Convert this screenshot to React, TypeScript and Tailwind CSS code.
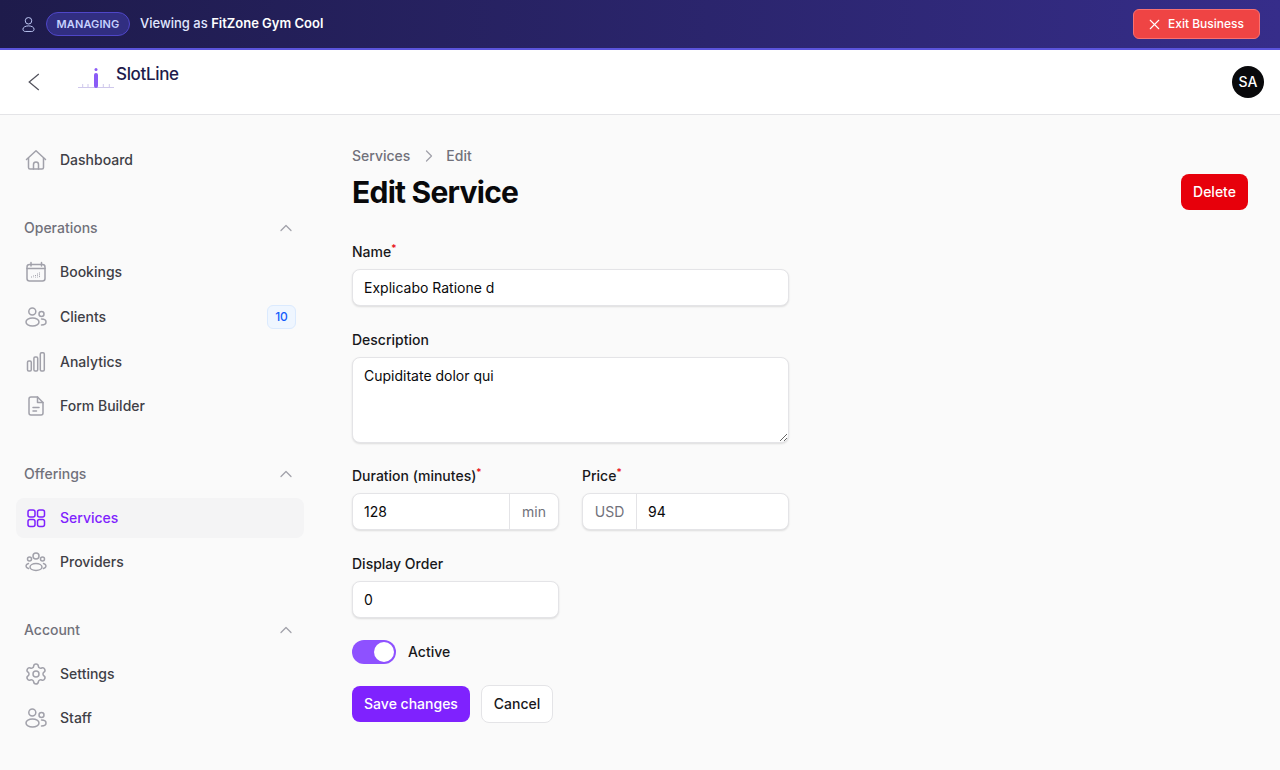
import { ChevronRight, ChevronUp, Settings, X } from "lucide-react";
import type { ReactNode } from "react";

const iconClass = "w-6 h-6 shrink-0 text-[#a1a1aa]";

function Svg({ children, className = iconClass }: { children: ReactNode; className?: string }) {
  return (
    <svg
      viewBox="0 0 24 24"
      fill="none"
      stroke="currentColor"
      strokeWidth="1.5"
      strokeLinecap="round"
      strokeLinejoin="round"
      className={className}
    >
      {children}
    </svg>
  );
}

const HomeIcon = () => (
  <Svg>
    <path d="M2.500 11.500 12 2.800l9.500 8.700" />
    <path d="M4.500 10v9.500a1.500 1.500 0 0 0 1.500 1.500h12a1.500 1.500 0 0 0 1.500-1.500V10" />
    <path d="M9.500 21v-4.500a2.500 2.500 0 0 1 5 0V21" />
  </Svg>
);

const CalendarIcon = () => (
  <Svg>
    <rect x="3" y="4.500" width="18" height="16.500" rx="2.500" />
    <path d="M3 8.500h18M7 2.500v3.500M17.500 2.500v3.500" />
    <path d="M7.500 16.500v1M9.500 15.500v2M11.500 15v2.500M13.500 13.500v4M15.500 12.500v5" strokeWidth="1" strokeDasharray="1 0.8" strokeLinecap="butt" />
  </Svg>
);

const UsersIcon = () => (
  <Svg>
    <circle cx="8.300" cy="6.500" r="3.500" />
    <circle cx="17.500" cy="9" r="2.500" />
    <ellipse cx="8.500" cy="17" rx="6.500" ry="4" />
    <path d="M17.500 14c2.500 0 4.500 1.300 4.500 3s-2 3-4.500 3" />
  </Svg>
);

const BarsIcon = () => (
  <Svg>
    <rect x="3.500" y="11" width="3.800" height="10" rx="1.200" />
    <rect x="9.900" y="7" width="3.800" height="14" rx="1.200" />
    <rect x="16.300" y="2.800" width="4" height="18.200" rx="1.200" />
  </Svg>
);

const FileIcon = () => (
  <Svg>
    <path d="M13.500 3H7a2 2 0 0 0-2 2v14a2 2 0 0 0 2 2h10a2 2 0 0 0 2-2V8.500L13.500 3Z" />
    <path d="M13.500 3v5.500H19" />
    <path d="M9 13.500h6M9 17h3.500" />
  </Svg>
);

const GridIcon = () => (
  <Svg className="w-6 h-6 shrink-0 text-[#7f22fe]">
    <rect x="4" y="4" width="7" height="7" rx="2" />
    <rect x="13.500" y="4" width="7" height="7" rx="2" />
    <rect x="4" y="13.500" width="7" height="7" rx="2" />
    <rect x="13.500" y="13.500" width="7" height="7" rx="2" />
  </Svg>
);

const ProvidersIcon = () => (
  <Svg>
    <circle cx="12" cy="6" r="3" />
    <circle cx="5.500" cy="9" r="2" />
    <circle cx="18.500" cy="9" r="2" />
    <ellipse cx="12" cy="17" rx="6" ry="3.500" />
    <path d="M4.500 13.500C3 14 2 15 2 16s1 2 2.500 2.500M19.500 13.500C21 14 22 15 22 16s-1 2-2.500 2.500" />
  </Svg>
);

function NavItem({
  icon,
  label,
  active,
  badge,
}: {
  icon: ReactNode;
  label: string;
  active?: boolean;
  badge?: string;
}) {
  return (
    <div
      className={`flex items-center gap-3 px-2 rounded-lg text-sm font-[450] ${badge ? "h-[42px]" : "h-10"} ${
        active ? "bg-[#f4f4f5] text-[#7f22fe]" : "text-[#3f3f46]"
      }`}
    >
      {icon}
      <span className="flex-1">{label}</span>
      {badge && (
        <span className="h-6 w-[29px] flex items-center justify-center rounded-md border border-[#dbeafe] bg-[#eff6ff] text-xs font-[450] text-[#155dfc]">
          {badge}
        </span>
      )}
    </div>
  );
}

function NavGroup({ title, children }: { title: string; children: ReactNode }) {
  return (
    <div className="mt-[38px]">
      <div className="h-5 mb-[14px] px-2 flex items-center justify-between text-sm font-[450] text-[#71717b]">
        <span>{title}</span>
        <ChevronUp className="w-5 h-5 text-[#a1a1aa]" strokeWidth={1.5} />
      </div>
      <div className="flex flex-col gap-1">{children}</div>
    </div>
  );
}

function Label({ children, required }: { children: ReactNode; required?: boolean }) {
  return (
    <label className="block h-5 mb-[7px] text-sm leading-5 font-[450] text-[#18181b]">
      {children}
      {required && <sup className="text-[#e7000b] text-[10px]">*</sup>}
    </label>
  );
}

const boxClass =
  "h-[37px] bg-white border border-[#e4e4e7] rounded-lg shadow-[0_1px_2px_rgba(0,0,0,0.12)]";
const inputClass = "w-full min-w-0 bg-transparent px-[11px] text-sm text-[#09090b] outline-none";

export default function App() {
  return (
    <div className="min-h-screen bg-[#fafafa] font-['Inter',sans-serif] text-[#09090b]">
      <div className="h-[50px] border-b-2 border-[#5b54dc] bg-gradient-to-r from-[#1e1b4b] to-[#362d8a] flex items-center justify-between pl-[22px] pr-5">
        <div className="flex items-center">
          <svg
            viewBox="0 0 14 18"
            fill="none"
            stroke="currentColor"
            strokeWidth="1"
            className="w-[13px] h-[17px] text-[#c7d2fe]"
          >
            <circle cx="7" cy="5" r="3.500" />
            <path d="M7 10.500c-3.300 0-6 1.500-6 3.500 0 1.500 1 2.500 2.500 2.500h7c1.500 0 2.500-1 2.500-2.500 0-2-2.700-3.500-6-3.500Z" />
          </svg>
          <span className="ml-[11px] h-[24px] w-[84px] flex items-center justify-center rounded-full border border-[#4f46c8] bg-[#312e81] text-[11px] font-semibold tracking-[0.01em] text-[#c7d2fe]">
            MANAGING
          </span>
          <span className="ml-[10px] text-[13px] font-[450] text-[#e0e7ff]">
            Viewing as <span className="font-semibold text-white">FitZone Gym Cool</span>
          </span>
        </div>
        <button className="h-[30px] w-[127px] flex items-center gap-[5px] pl-3 rounded-md border border-[#f87171] bg-[#ef4444] text-xs font-medium text-white">
          <X className="w-[17px] h-[17px]" strokeWidth={1.5} />
          Exit Business
        </button>
      </div>

      <header className="h-[65px] bg-white border-b border-[#e4e4e7] flex items-center justify-between pl-[22px] pr-4">
        <div className="flex items-center">
          <svg viewBox="0 0 24 24" fill="none" stroke="#52525c" strokeWidth="1.250" className="w-6 h-6">
            <path d="M16.800 4 7.200 12l9.600 8" />
          </svg>
          <div className="ml-[32px] w-[37px] h-[36px] mb-1">
            <svg viewBox="0 0 37 36" className="w-[37px] h-[36px]" fill="none">
              <path d="M0 25.500h36" stroke="#cfc8ec" strokeWidth="1" />
              <path d="M4.700 22v3.500M10 22v3.500M25.300 22v3.500M31.300 22v3.500" stroke="#cfc8ec" strokeWidth="1" />
              <rect x="16" y="11" width="4" height="15" rx="2" fill="#8b5cf6" />
              <circle cx="18" cy="7.500" r="1.500" fill="#8b5cf6" />
            </svg>
          </div>
          <span className="ml-[1px] mb-4 text-[17px] leading-6 font-medium tracking-[-0.02em] text-[#1e1b4b]">
            SlotLine
          </span>
        </div>
        <div className="w-8 h-8 rounded-full bg-[#09090b] flex items-center justify-center text-sm font-medium text-white">
          SA
        </div>
      </header>

      <div className="flex">
        <aside className="w-[320px] shrink-0 px-4 pt-[25px]">
          <NavItem icon={<HomeIcon />} label="Dashboard" />
          <NavGroup title="Operations">
            <NavItem icon={<CalendarIcon />} label="Bookings" />
            <NavItem icon={<UsersIcon />} label="Clients" badge="10" />
            <NavItem icon={<BarsIcon />} label="Analytics" />
            <NavItem icon={<FileIcon />} label="Form Builder" />
          </NavGroup>
          <NavGroup title="Offerings">
            <NavItem icon={<GridIcon />} label="Services" active />
            <NavItem icon={<ProvidersIcon />} label="Providers" />
          </NavGroup>
          <NavGroup title="Account">
            <NavItem icon={<Settings className={iconClass} strokeWidth={1.5} />} label="Settings" />
            <NavItem icon={<UsersIcon />} label="Staff" />
          </NavGroup>
        </aside>

        <main className="flex-1 pl-8 pr-8 pt-[31px]">
          <div className="flex items-center h-5 text-sm font-[450] text-[#71717b]">
            <span>Services</span>
            <ChevronRight className="w-5 h-5 ml-[9px] mr-[7px] text-[#a1a1aa]" strokeWidth={1.5} />
            <span>Edit</span>
          </div>
          <div className="mt-2 flex items-center justify-between">
            <h1 className="text-3xl leading-9 font-bold tracking-[-0.025em] text-[#09090b]">Edit Service</h1>
            <button className="h-9 w-[67px] rounded-lg bg-[#e7000b] text-sm font-[450] text-white">Delete</button>
          </div>

          <form className="mt-8 w-[437px]">
            <Label required>Name</Label>
            <div className={boxClass}>
              <input readOnly value="Explicabo Ratione d" className={`${inputClass} h-full`} />
            </div>

            <div className="mt-6">
              <Label>Description</Label>
              <textarea
                readOnly
                value="Cupiditate dolor qui"
                className="block w-full h-[86px] bg-white border border-[#e4e4e7] rounded-lg shadow-[0_1px_2px_rgba(0,0,0,0.12)] px-[11px] py-2 text-sm leading-5 text-[#09090b] outline-none"
              />
            </div>

            <div className="mt-[23px] grid grid-cols-2 gap-[23px]">
              <div>
                <Label required>Duration (minutes)</Label>
                <div className={`${boxClass} flex overflow-hidden`}>
                  <input readOnly value="128" className={inputClass} />
                  <span className="w-[49px] shrink-0 flex items-center justify-center border-l border-[#e4e4e7] text-sm text-[#71717b]">
                    min
                  </span>
                </div>
              </div>
              <div>
                <Label required>Price</Label>
                <div className={`${boxClass} flex overflow-hidden`}>
                  <span className="w-[54px] shrink-0 flex items-center justify-center border-r border-[#e4e4e7] text-sm text-[#71717b]">
                    USD
                  </span>
                  <input readOnly value="94" className={inputClass} />
                </div>
              </div>
            </div>

            <div className="mt-6 w-[207px]">
              <Label>Display Order</Label>
              <div className={boxClass}>
                <input readOnly value="0" className={`${inputClass} h-full`} />
              </div>
            </div>

            <div className="mt-[22px] flex items-center gap-3">
              <div className="w-11 h-6 rounded-full bg-[#8e51ff] flex items-center justify-end pr-[2px]">
                <div className="w-5 h-5 rounded-full bg-white" />
              </div>
              <span className="text-sm font-[450] text-[#18181b]">Active</span>
            </div>

            <div className="mt-[21px] flex items-center gap-[11px]">
              <button type="button" className="h-9 w-[118px] rounded-lg bg-[#7f22fe] text-sm font-[450] text-white">
                Save changes
              </button>
              <button
                type="button"
                className="h-[38px] w-[72px] rounded-lg border border-[#e4e4e7] bg-white text-sm font-[450] text-[#18181b]"
              >
                Cancel
              </button>
            </div>
          </form>
        </main>
      </div>
    </div>
  );
}
